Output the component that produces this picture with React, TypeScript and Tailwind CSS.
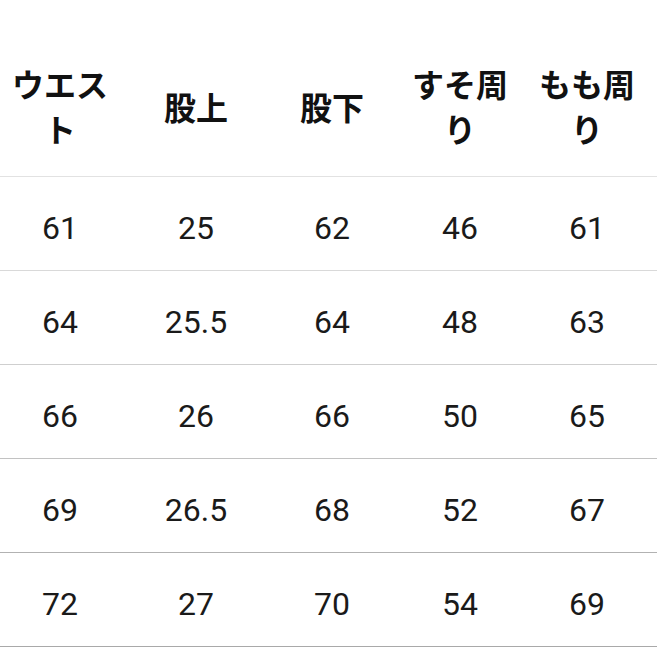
import React from 'react'

const headers = ['ウエスト', '股上', '股下', 'すそ周り', 'もも周り']

const rows = [
  { values: ['61', '25', '62', '46', '61'], line: 'border-[#d9d9d9]' },
  { values: ['64', '25.5', '64', '48', '63'], line: 'border-[#cfcfcf]' },
  { values: ['66', '26', '66', '50', '65'], line: 'border-[#c2c2c2]' },
  { values: ['69', '26.5', '68', '52', '67'], line: 'border-[#b2b2b2]' },
  { values: ['72', '27', '70', '54', '69'], line: 'border-[#a9a9a9]' },
]

const cols = 'grid grid-cols-[120px_152px_120px_136px_118px]'

export default function App() {
  return (
    <div className="w-[657px] h-[657px] bg-white overflow-hidden">
      <div
        className={`${cols} h-[177px] pt-[36px] border-b border-[#e2e2e2]`}
        style={{ fontFamily: '"Noto Sans CJK JP", "Noto Sans", sans-serif' }}
      >
        {headers.map((h) => (
          <div key={h} className="flex items-center justify-center">
            <span className="max-w-[100px] text-center text-[32px] leading-[45px] font-bold text-[#111]">
              {h}
            </span>
          </div>
        ))}
      </div>
      {rows.map((row, i) => (
        <div
          key={i}
          className={`${cols} h-[94px] border-b ${row.line}`}
          style={{ fontFamily: 'Roboto, "Noto Sans", sans-serif' }}
        >
          {row.values.map((v, j) => (
            <div key={j} className="flex items-center justify-center pt-[8px] text-[32px] text-[#1a1a1a]">
              {v}
            </div>
          ))}
        </div>
      ))}
    </div>
  )
}
